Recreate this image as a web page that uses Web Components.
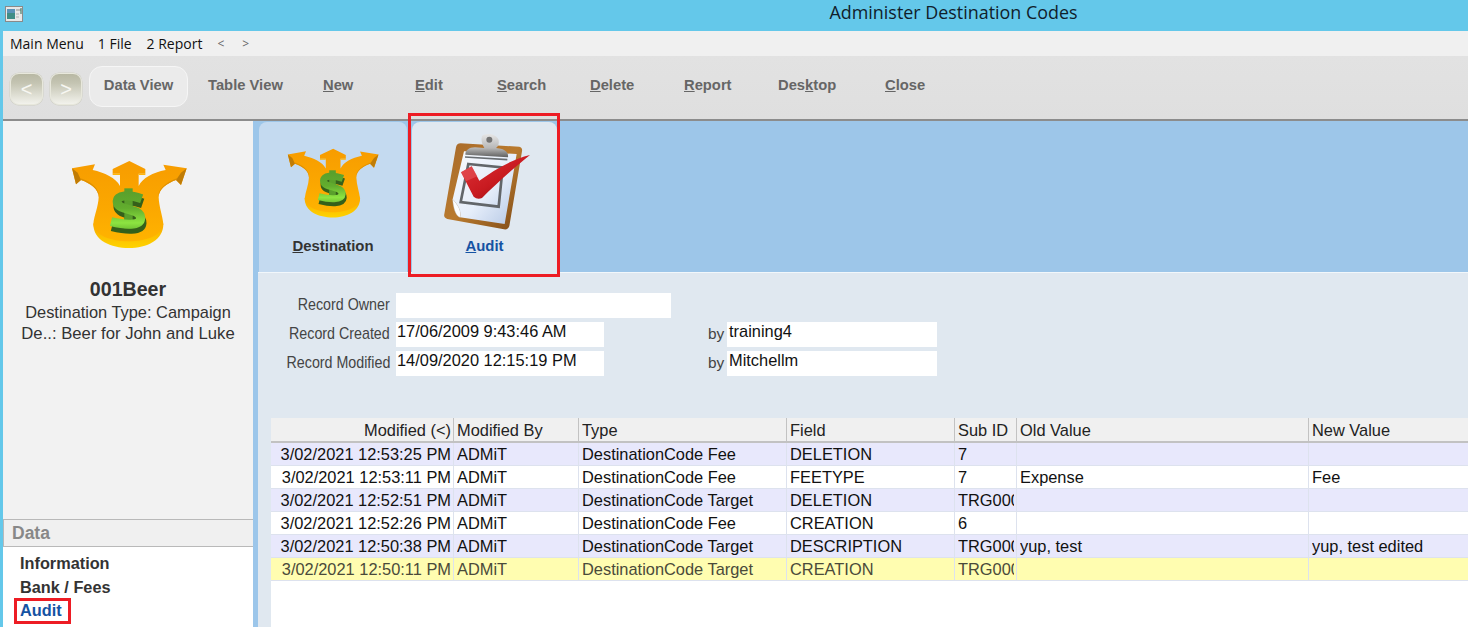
<!DOCTYPE html>
<html><head><meta charset="utf-8"><title>Administer Destination Codes</title>
<style>
html,body{margin:0;padding:0;height:627px;overflow:hidden;background:#64c8ea;font-family:"Liberation Sans",Arial,sans-serif}
</style></head><body>
<app-window>
  <title-bar>Administer Destination Codes</title-bar>
  <menu-bar></menu-bar>
  <tool-bar></tool-bar>
  <main-row>
    <side-panel></side-panel>
    <content-pane>
      <tab-strip></tab-strip>
      <audit-form></audit-form>
      <audit-table></audit-table>
    </content-pane>
  </main-row>
</app-window>
<script>
function el(name, css, html, cls){
  customElements.define(name, class extends HTMLElement{
    constructor(){super();const r=this.attachShadow({mode:'open'});r.innerHTML='<style>'+css+'</style>'+html;}
    connectedCallback(){ if(cls) cls.call(this); }
  });
}
el('app-window',':host{display:flex;flex-direction:column;width:1468px;height:627px;overflow:hidden;background:#64c8ea}','<slot></slot>');
el('window-glyph',':host{display:block;width:18px;height:16px}svg{display:block}',
`<svg width="18" height="16" viewBox="0 0 18 16"><rect x=".5" y=".5" width="17" height="15" fill="#e8e8e8" stroke="#8a8a8a"/><rect x="2" y="3" width="8" height="10" fill="#3f8d86"/><rect x="2" y="3" width="8" height="4" fill="#5a93b8"/><rect x="11" y="3" width="5" height="2" fill="#bbb"/><rect x="11" y="7" width="3" height="2" fill="#ccc"/><rect x="11" y="10" width="3" height="2" fill="#ccc"/><rect x="15.5" y="2" width="1" height="6" fill="#2d6a55"/></svg>`);
el('title-bar',':host{display:block;flex:none;height:31px;position:relative;background:#64c8ea}.row{display:flex;height:26px;align-items:center;padding-left:5px}.t{position:absolute;left:0;right:0;top:1px;padding-left:439px;text-align:center;font:17.9px/22px "Open Sans","Liberation Sans",sans-serif;color:#10202a}window-glyph{margin-top:2px}',
'<div class="row"><window-glyph></window-glyph></div><div class="t"><slot></slot></div>');
el('menu-bar',':host{display:flex;flex:none;height:25px;margin-left:3px;background:#f0f0f0;align-items:center;padding-left:7px;font:14px "Open Sans","Liberation Sans",sans-serif;color:#111}span{margin-right:14px;white-space:nowrap}span:nth-of-type(2){margin-right:15px}span:nth-of-type(3){margin-right:15px}.a{color:#666;font-size:12px;margin-right:18px;margin-left:0}',
'<span>Main Menu</span><span>1 File</span><span>2 Report</span><span class="a">&lt;</span><span class="a">&gt;</span>');
el('nav-btn',':host{display:flex;width:33px;height:32px;align-items:center;justify-content:center;color:#f7f7f2;font:20px "Liberation Sans",sans-serif;background:linear-gradient(#b8b8a4,#c4c4b2 30%,#f2f2ec);border:1px solid #e8e8dc;border-radius:9px;box-sizing:border-box;box-shadow:0 0 0 .5px #cfcfc4}','<slot></slot>');
el('tool-btn',':host{display:block;box-sizing:border-box;font:bold 14.75px/20px "Liberation Sans",sans-serif;color:#666;white-space:nowrap;flex:none}',
'<slot></slot>');
el('tool-bar',':host{display:flex;flex:none;height:63px;margin-left:3px;background:linear-gradient(#e2e2e2,#dfdfdf);border-bottom:2px solid #8c8c8c;align-items:center;position:relative}.l{display:flex;align-items:center;padding-left:7px}nav-btn+nav-btn{margin-left:7px;width:32px}.sel{display:flex;align-items:center;justify-content:center;margin:-3px 20px 0 7px;width:99px;height:41px;box-sizing:border-box;border:1px solid #f6f6f6;border-radius:13px;background:#ebebeb;}nav-btn{margin-top:3px}tool-btn{margin-top:-5px}.sel tool-btn{margin-top:-2px}',
`<div class="l"><nav-btn>&lt;</nav-btn><nav-btn>&gt;</nav-btn>
<div class="sel"><tool-btn>Data View</tool-btn></div>
<tool-btn style="width:115px">Table View</tool-btn>
<tool-btn style="width:92px"><u>N</u>ew</tool-btn>
<tool-btn style="width:82px"><u>E</u>dit</tool-btn>
<tool-btn style="width:93px"><u>S</u>earch</tool-btn>
<tool-btn style="width:94px"><u>D</u>elete</tool-btn>
<tool-btn style="width:94px"><u>R</u>eport</tool-btn>
<tool-btn style="width:107px">Des<u>k</u>top</tool-btn>
<tool-btn><u>C</u>lose</tool-btn></div>`);
el('main-row',':host{display:flex;flex:1;min-height:0;margin-left:3px}','<slot></slot>');
el('money-icon',':host{display:block;width:135px;height:105px}svg{display:block;width:100%;height:100%}',
`<svg viewBox="0 0 405 315">
<defs>
<linearGradient id="side" x1="0" y1="225" x2="0" y2="295" gradientUnits="userSpaceOnUse"><stop offset="0" stop-color="#f8ac00"/><stop offset="1" stop-color="#ffd400"/></linearGradient>
<linearGradient id="top" x1="0" y1="30" x2="0" y2="280" gradientUnits="userSpaceOnUse"><stop offset="0" stop-color="#f79c00"/><stop offset=".55" stop-color="#fba700"/><stop offset="1" stop-color="#ffb400"/></linearGradient>
<linearGradient id="grn" x1="0" y1="125" x2="0" y2="235" gradientUnits="userSpaceOnUse"><stop offset="0" stop-color="#5aa02c"/><stop offset=".45" stop-color="#62ad2e"/><stop offset=".85" stop-color="#8de441"/><stop offset="1" stop-color="#76c836"/></linearGradient>
</defs>
<path d="M97 222C97 272 150 294 203 294C258 294 307 270 307 222L300 205L110 205Z" fill="url(#side)"/>
<path d="M33 55L45 103L60 90C88 100 113 116 113 142C112 170 100 195 97 222C100 256 150 274 203 274C256 274 304 256 307 222C304 195 294 170 293 142C293 116 318 100 345 90L360 105L377 55L307 44L314 60C275 68 245 84 233 108L233 71L253 71L253 57L205 33L155 57L155 71L177 71L177 108C165 84 130 68 95 60L102 43Z" fill="url(#top)"/>
<path d="M33 55L45 103L60 90L50 68Z" fill="#c07c06"/>
<path d="M377 55L360 105L345 90L360 68Z" fill="#c07c06"/>
<path d="M155 71L177 71L177 75L155 75Z" fill="#ffb60a"/><path d="M233 71L253 71L253 75L233 75Z" fill="#ffb60a"/>
<path d="M60 90C88 100 113 116 113 142L113 130C108 110 88 94 56 84Z" fill="#e09000"/>
<path d="M345 90C318 100 293 116 293 142L293 130C298 110 322 94 350 84Z" fill="#e09000"/>
<g fill="none" stroke-linejoin="round">
<rect x="190" y="128" width="25" height="120" fill="#4f8b25"/>
<path d="M242 153C205 140 165 140 169 165C173 190 240 180 239 212C237 236 190 232 150 222" stroke="#35601a" stroke-width="29" transform="translate(3 7)"/>
<rect x="190" y="115" width="25" height="120" fill="#5aa02c"/>
<path d="M242 146C205 133 165 133 169 158C173 183 240 173 239 205C237 229 190 225 150 215" stroke="url(#grn)" stroke-width="27"/>
</g>
</svg>`);
el('clip-icon',':host{display:block;width:125px;height:115px}svg{display:block;width:100%;height:100%}',
`<svg viewBox="0 0 375 345">
<defs>
<linearGradient id="wood" x1="0" y1="0" x2="1" y2="1"><stop offset="0" stop-color="#a86a2a"/><stop offset=".5" stop-color="#b97a2e"/><stop offset="1" stop-color="#7e4a16"/></linearGradient>
<linearGradient id="pap" x1="0" y1="0" x2="1" y2="1"><stop offset="0" stop-color="#f7f9fd"/><stop offset=".55" stop-color="#e6eefa"/><stop offset="1" stop-color="#b4c7e4"/></linearGradient>
<linearGradient id="red" x1="0" y1="0" x2="1" y2="1"><stop offset="0" stop-color="#e0343a"/><stop offset=".55" stop-color="#c81a20"/><stop offset="1" stop-color="#7c0c10"/></linearGradient>
<linearGradient id="metal" x1="0" y1="0" x2="0" y2="1"><stop offset="0" stop-color="#e6e6e6"/><stop offset=".6" stop-color="#b8b8b8"/><stop offset="1" stop-color="#5e5e5e"/></linearGradient>
</defs>
<path d="M122 58L298 68Q308 70 306 82L268 306Q264 318 252 316L82 285Q70 281 73 270L108 70Q110 58 122 58Z" fill="url(#wood)"/>
<path d="M132 82L290 90L254 300L120 280C126 262 112 240 98 226Z" fill="url(#pap)"/>
<path d="M98 226C112 240 126 262 120 280C106 276 100 250 98 226Z" fill="#fbfdff" stroke="#bfcde2"/>
<path d="M145 120L248 130L236 248L122 234Z" fill="none" stroke="#62666a" stroke-width="8"/>
<path d="M186 36C198 26 228 28 236 48C238 60 234 68 228 72L242 74C260 78 266 90 264 100L136 92C136 80 146 70 165 70L193 72C186 60 182 48 186 36Z" fill="url(#metal)"/>
<circle cx="208" cy="47" r="9" fill="#737373"/>
<path d="M135 99L262 107" stroke="#686d72" stroke-width="5"/>
<path d="M123 145L155 127L178 170C220 140 270 108 330 93C272 140 226 182 186 222Q172 228 161 218Z" fill="url(#red)"/>
<path d="M123 145L155 127L172 157L138 172Z" fill="#e85a5e" opacity=".55"/>
</svg>`);
el('nav-item',':host{display:block;position:relative;width:max-content;font:bold 16.3px/23.5px "Liberation Sans",sans-serif;color:#333}:host([active]){color:#1553a3}:host([marked])::after{content:"";position:absolute;left:-6px;right:-9px;top:-1px;bottom:-1px;border:3px solid #ed1c24;box-sizing:content-box;pointer-events:none}',
'<slot></slot>');
el('side-panel',`:host{display:flex;flex-direction:column;width:250px;flex:none;background:#f2f2f2;box-sizing:border-box;color:#333}
.top{flex:1;display:flex;flex-direction:column;align-items:center;padding-top:29px}
.n{font:bold 19.6px/24px "Liberation Sans",sans-serif;margin-top:22px;color:#333}
.d{font:16.4px/21px "Liberation Sans",sans-serif;white-space:nowrap;color:#333;}
.h{height:28px;box-sizing:border-box;border:1px solid #b9b9b9;border-right:0;background:#f0f0f0;color:#888;font:bold 17.5px/26px "Liberation Sans",sans-serif;padding-left:8px}
.l{height:80px;background:#fff;padding:5px 0 0 17px;box-sizing:border-box}`,
`<div class="top"><money-icon></money-icon><div class="n">001Beer</div><div class="d" style="margin-top:1px">Destination Type: Campaign</div><div class="d" style="font-size:16.7px">De..: Beer for John and Luke</div></div>
<div class="h">Data</div><div class="l"><nav-item>Information</nav-item><nav-item>Bank / Fees</nav-item><nav-item active marked>Audit</nav-item></div>`);
el('content-pane',':host{display:flex;flex-direction:column;flex:1;min-width:0;background:#e0e8f0;border-left:5px solid #9cc6ea}','<slot></slot>');
el('tab-item',`:host{display:block;position:relative;box-sizing:border-box;height:150px;border-radius:8px 8px 0 0;background:#c4daf0;font:bold 14.9px/18px "Liberation Sans",sans-serif;color:#333;text-align:center;padding-top:3px;flex:none}
:host([active]){background:#e0e8f0;color:#1553a3;height:152px}
:host([marked])::after{content:"";position:absolute;left:-4px;right:-3px;top:-9px;bottom:-3px;border:3px solid #ed1c24;pointer-events:none}
.i{height:112px;display:flex;justify-content:center;align-items:flex-start}`,
'<div class="i"><slot name="icon"></slot></div><slot></slot>');
el('tab-strip',':host{display:flex;flex:none;height:152px;box-sizing:border-box;background:#9dc6e9;padding:1px 0 0 1px;gap:5px;border-bottom:1px solid #f2f7fb;width:100%}.a{width:148px}.b{width:145px}',
`<tab-item class="a"><money-icon slot="icon" style="width:107px;height:83px;margin:15px 2px 0 0"></money-icon><u>D</u>estination</tab-item>
<tab-item class="b" active marked><clip-icon slot="icon" style="margin:-1px 4px 0 0"></clip-icon><u>A</u>udit</tab-item>`);
el('audit-form',`:host{display:block;flex:none;height:145px;box-sizing:border-box;padding-top:20px;font:16.4px/20px "Liberation Sans",sans-serif}
.r{display:flex;height:25px;margin-bottom:4px;align-items:center}
.lab{width:132px;text-align:right;color:#444;flex:none;margin-top:-3px}.lab span{display:inline-block;transform:scaleX(.87);transform-origin:right center;white-space:nowrap}
.v{margin-left:6px;background:#fff;height:25px;line-height:18px;padding-left:1px;box-sizing:border-box;color:#111;white-space:nowrap;overflow:hidden;flex:none}
.by{margin-left:104px;width:19px;color:#444;flex:none;margin-top:-2px;font-size:15.4px}.by+.v{margin-left:0;width:210px;padding-left:2px}`,
`<div class="r"><div class="lab"><span>Record Owner</span></div><div class="v" style="width:275px"></div></div>
<div class="r"><div class="lab"><span>Record Created</span></div><div class="v" style="width:208px">17/06/2009 9:43:46 AM</div><div class="by">by</div><div class="v">training4</div></div>
<div class="r"><div class="lab"><span>Record Modified</span></div><div class="v" style="width:208px">14/09/2020 12:15:19 PM</div><div class="by">by</div><div class="v">Mitchellm</div></div>`);
const cols='183px 125px 208px 168px 62px 292px 200px';
const rows=[
['3/02/2021 12:53:25 PM','ADMiT','DestinationCode Fee','DELETION','7','',''],
['3/02/2021 12:53:11 PM','ADMiT','DestinationCode Fee','FEETYPE','7','Expense','Fee'],
['3/02/2021 12:52:51 PM','ADMiT','DestinationCode Target','DELETION','TRG000','',''],
['3/02/2021 12:52:26 PM','ADMiT','DestinationCode Fee','CREATION','6','',''],
['3/02/2021 12:50:38 PM','ADMiT','DestinationCode Target','DESCRIPTION','TRG000','yup, test','yup, test edited'],
['3/02/2021 12:50:11 PM','ADMiT','DestinationCode Target','CREATION','TRG000','','']];
el('audit-table',`:host{display:block;flex:1;margin-left:13px;background:#fff;font:16.4px "Liberation Sans",sans-serif;color:#111;overflow:hidden}
.g{display:grid;grid-template-columns:${cols};width:1238px}
.c{box-sizing:border-box;height:23px;line-height:22px;border-right:1px solid #dde2ee;border-bottom:1px solid #dde2ee;padding:0 2px 0 3px;white-space:nowrap}
.c span{display:block;overflow:hidden;height:22px}
.hd{height:25px;line-height:24px;background:#f0f0f0;border-right:1px solid #c2c2c2;border-bottom:2px solid #c2c2c2;color:#222}
.hd span{height:24px}
.first{text-align:right}
.alt{background:#e8e8fc}.sel{background:#fffdb0;color:#4a4a3a}`,
'<div class="g"></div>',
function(){
  const g=this.shadowRoot.querySelector('.g');if(g.childElementCount)return;
  const add=(t,c)=>{const d=document.createElement('div');d.className='c '+c;const s=document.createElement('span');s.textContent=t;d.append(s);g.append(d)};
  ['Modified (<)','Modified By','Type','Field','Sub ID','Old Value','New Value'].forEach((t,i)=>add(t,'hd'+(i?'':' first')));
  rows.forEach((r,ri)=>r.forEach((t,i)=>add(t,(ri==5?'sel':ri%2?'':'alt')+(i?'':' first'))));
});
</script>
</body></html>
